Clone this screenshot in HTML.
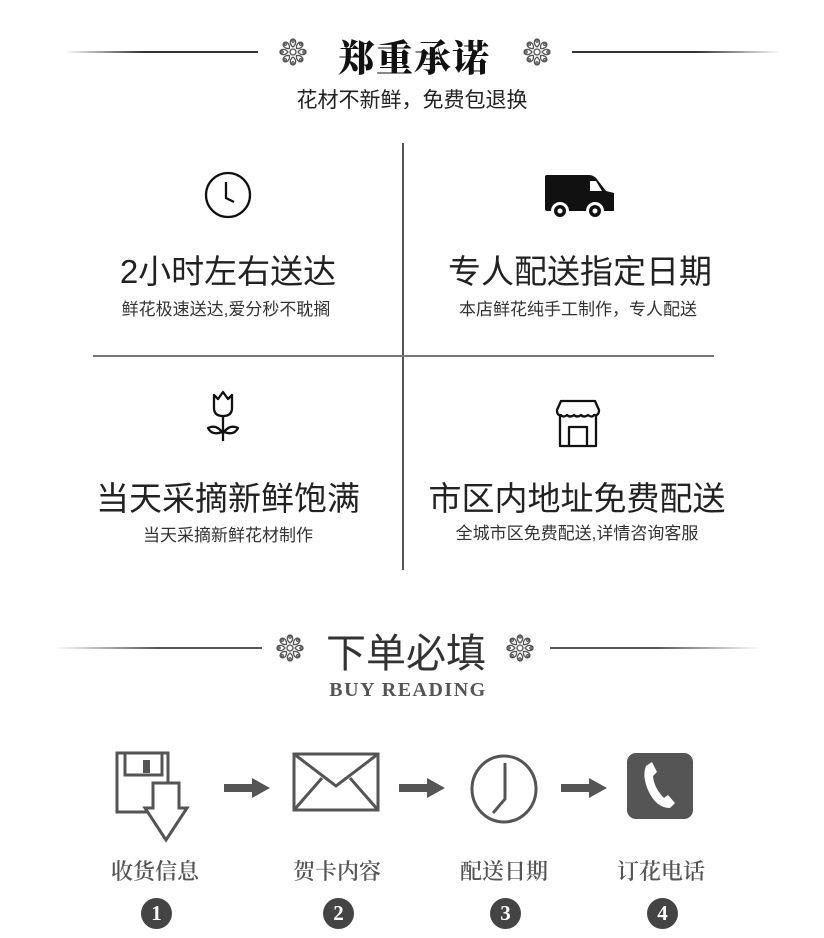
<!DOCTYPE html>
<html><head><meta charset="utf-8"><style>
body{margin:0;width:824px;height:938px;background:#fff;position:relative;overflow:hidden;font-family:"Liberation Sans","Noto Sans CJK SC",sans-serif;color:#222}
.a{position:absolute;white-space:nowrap}
.c{transform:translateX(-50%)}
.ln{position:absolute;height:2px}
.t{font-size:33px;color:#222}
.s{font-size:17px;color:#333}
.lab{font-family:"Liberation Serif","Noto Serif CJK SC",serif;font-size:22px;font-weight:600;color:#555}
.num{position:absolute;width:31px;height:31px;border-radius:50%;background:#444;color:#fff;font-family:"Liberation Serif",serif;font-weight:bold;font-size:21px;text-align:center;line-height:31px}
</style></head><body>
<svg width="0" height="0" style="position:absolute"><defs>
<g id="orn" fill="none" stroke="#555" stroke-width="1.3">
<circle cx="0" cy="0" r="3"/>
<g id="pet"><path d="M0-5 C-4-8 -3-13 0-13 C3-13 4-8 0-5Z"/><circle cx="0" cy="-11" r="1.2"/></g>
<use href="#pet" transform="rotate(45)"/><use href="#pet" transform="rotate(90)"/><use href="#pet" transform="rotate(135)"/><use href="#pet" transform="rotate(180)"/><use href="#pet" transform="rotate(225)"/><use href="#pet" transform="rotate(270)"/><use href="#pet" transform="rotate(315)"/>
</g></defs></svg>

<div class="ln" style="left:65px;top:51px;width:193px;background:linear-gradient(90deg,#fff,#333 40%)"></div>
<div class="ln" style="left:572px;top:51px;width:208px;background:linear-gradient(90deg,#333 60%,#fff)"></div>
<svg class="a" style="left:279px;top:38px" width="28" height="28" viewBox="-14 -14 28 28"><use href="#orn"/></svg>
<svg class="a" style="left:523px;top:38px" width="28" height="28" viewBox="-14 -14 28 28"><use href="#orn"/></svg>
<div class="a c" style="left:414px;top:28px;font-family:'Noto Serif CJK SC',serif;font-weight:900;font-size:37px;color:#111;letter-spacing:1px">郑重承诺</div>
<div class="a c" style="left:412px;top:84px;font-size:21px;color:#222">花材不新鲜，免费包退换</div>

<div class="a" style="left:402px;top:143px;width:2px;height:427px;background:#555"></div>
<div class="a" style="left:93px;top:355px;width:621px;height:2px;background:#777"></div>

<svg class="a" style="left:204px;top:171px" width="48" height="48" viewBox="0 0 48 48" fill="none" stroke="#111" stroke-width="2.3"><circle cx="24" cy="24" r="22"/><path d="M22 11V27L30 31"/></svg>
<svg class="a" style="left:543px;top:173px" width="74" height="48" viewBox="0 0 74 48"><path d="M4 2H46Q50 2 53 5L63 18L71 20V38H4Q2 38 2 36V4Q2 2 4 2Z" fill="#111"/><path d="M47 8H53L59 18H47Z" fill="#fff"/><circle cx="17" cy="38" r="9" fill="#fff"/><circle cx="17" cy="38" r="6" fill="#111"/><circle cx="17" cy="38" r="2.5" fill="#fff"/><circle cx="52" cy="38" r="9" fill="#fff"/><circle cx="52" cy="38" r="6" fill="#111"/><circle cx="52" cy="38" r="2.5" fill="#fff"/></svg>

<div class="a c t" style="left:228px;top:245px">2小时左右送达</div>
<div class="a c s" style="left:226px;top:295px">鲜花极速送达,爱分秒不耽搁</div>
<div class="a c t" style="left:580px;top:245px">专人配送指定日期</div>
<div class="a c s" style="left:578px;top:295px">本店鲜花纯手工制作，专人配送</div>

<svg class="a" style="left:202px;top:388px" width="42" height="60" viewBox="0 0 42 60" fill="none" stroke="#111" stroke-width="2.3" stroke-linejoin="round"><path d="M12 7L16 11L21 4L26 11L30 7V20Q30 28 21 28Q12 28 12 20Z"/><path d="M21 28V53"/><path d="M20 44Q14 36 6 40Q10 48 20 44Z"/><path d="M22 44Q28 36 36 40Q32 48 22 44Z"/></svg>
<svg class="a" style="left:554px;top:398px" width="48" height="50" viewBox="0 0 48 50" fill="none" stroke="#111" stroke-width="2.3" stroke-linejoin="round"><path d="M7 3H41L45 12Q45 18 40 17Q38 20 34 17Q30 20 27 17Q23 20 20 17Q16 20 13 17Q9 20 7 17Q3 18 3 12Z"/><path d="M6 17V48H42V17"/><path d="M15 48V29H33V48"/></svg>

<div class="a c t" style="left:228px;top:472px">当天采摘新鲜饱满</div>
<div class="a c s" style="left:228px;top:521px">当天采摘新鲜花材制作</div>
<div class="a c t" style="left:577px;top:472px">市区内地址免费配送</div>
<div class="a c s" style="left:577px;top:519px">全城市区免费配送,详情咨询客服</div>

<div class="ln" style="left:55px;top:647px;width:207px;background:linear-gradient(90deg,#fff,#555 50%)"></div>
<div class="ln" style="left:550px;top:647px;width:210px;background:linear-gradient(90deg,#555 50%,#fff)"></div>
<svg class="a" style="left:276px;top:634px" width="28" height="28" viewBox="-14 -14 28 28"><use href="#orn"/></svg>
<svg class="a" style="left:506px;top:634px" width="28" height="28" viewBox="-14 -14 28 28"><use href="#orn"/></svg>
<div class="a c" style="left:406px;top:621px;font-size:40px;color:#333">下单必填</div>
<div class="a c" style="left:408px;top:679px;font-family:'Liberation Serif',serif;font-weight:bold;font-size:20px;color:#555;letter-spacing:1.5px">BUY READING</div>

<svg class="a" style="left:100px;top:740px" width="110" height="105" viewBox="100 740 110 105" fill="none" stroke="#555" stroke-width="3" stroke-linejoin="miter">
<path d="M152 812H117V753H168V783"/><path d="M125 753V775H162V753"/><rect x="143" y="760" width="7" height="13" fill="#555" stroke="none"/>
<path d="M153 783H179V808H187L166 840L145 808H153Z" fill="#fff"/></svg>
<svg class="a" style="left:222px;top:778px" width="50" height="20"><path d="M2 6H30V0L48 10L30 20V14H2Z" fill="#555"/></svg>
<svg class="a" style="left:292px;top:752px" width="88" height="60" viewBox="0 0 88 60" fill="none" stroke="#555" stroke-width="3"><rect x="2" y="2" width="84" height="56"/><path d="M2 2L44 34L86 2M2 58L30 26M86 58L58 26"/></svg>
<svg class="a" style="left:397px;top:778px" width="50" height="20"><path d="M2 6H30V0L48 10L30 20V14H2Z" fill="#555"/></svg>
<svg class="a" style="left:468px;top:752px" width="72" height="72" viewBox="0 0 72 72" fill="none" stroke="#555" stroke-width="3"><ellipse cx="36" cy="37" rx="32" ry="33"/><path d="M37 11V47L25 61"/></svg>
<svg class="a" style="left:559px;top:778px" width="50" height="20"><path d="M2 6H30V0L48 10L30 20V14H2Z" fill="#555"/></svg>
<svg class="a" style="left:626px;top:752px" width="68" height="68" viewBox="0 0 68 68"><rect x="1" y="1" width="66" height="66" rx="9" fill="#555"/><path d="M26 10L31 20L27 24Q28 36 38 46L42 43L49 51L44 56Q30 56 22 38Q16 24 20 14Z" fill="#fff"/></svg>

<div class="a c lab" style="left:155px;top:855px">收货信息</div>
<div class="a c lab" style="left:337px;top:855px">贺卡内容</div>
<div class="a c lab" style="left:504px;top:855px">配送日期</div>
<div class="a c lab" style="left:661px;top:855px">订花电话</div>
<div class="num" style="left:141px;top:898px">1</div>
<div class="num" style="left:323px;top:898px">2</div>
<div class="num" style="left:490px;top:898px">3</div>
<div class="num" style="left:647px;top:898px">4</div>
</body></html>
